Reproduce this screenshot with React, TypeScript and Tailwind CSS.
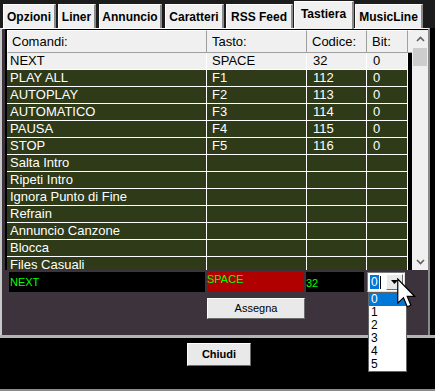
import React from "react"

const tabs = [
  { label: "Opzioni", cls: "ml-[3px] w-[53px]" },
  { label: "Liner", cls: "ml-[2px] w-[38px]" },
  { label: "Annuncio", cls: "ml-[3px] w-[63px]" },
  { label: "Caratteri", cls: "ml-[3px] w-[59px]" },
  { label: "RSS Feed", cls: "ml-[2px] w-[67px]" },
  { label: "Tastiera", cls: "ml-[1px] w-[60px]", active: true },
  { label: "MusicLine", cls: "ml-[1px] w-[68px]" },
]

const rows = [
  ["NEXT", "SPACE", "32", "0"],
  ["PLAY ALL", "F1", "112", "0"],
  ["AUTOPLAY", "F2", "113", "0"],
  ["AUTOMATICO", "F3", "114", "0"],
  ["PAUSA", "F4", "115", "0"],
  ["STOP", "F5", "116", "0"],
  ["Salta Intro", "", "", ""],
  ["Ripeti Intro", "", "", ""],
  ["Ignora Punto di Fine", "", "", ""],
  ["Refrain", "", "", ""],
  ["Annuncio Canzone", "", "", ""],
  ["Blocca", "", "", ""],
  ["Files Casuali", "", "", ""],
]

const Tab = ({ label, cls, active }: { label: string; cls: string; active?: boolean }) => (
  <div
    className={
      active
        ? `${cls} relative z-10 -mb-px flex h-[28px] items-start justify-center border-t border-l border-r-2 border-t-white border-l-white border-r-[#8a8a8a] bg-[#f0f0f0] pt-[3px] text-[12px] font-bold text-black`
        : `${cls} flex h-[24px] items-center justify-center border-t border-l border-r-2 border-t-white border-l-white border-r-[#8a8a8a] bg-[#f0f0f0] text-[12px] font-bold text-black`
    }
  >
    {label}
  </div>
)

const Btn = ({ label, cls }: { label: string; cls: string }) => (
  <div
    className={`${cls} flex items-center justify-center border border-t-white border-l-white border-r-[#6b6b6b] border-b-[#6b6b6b] bg-[#e9e9e9] text-black`}
  >
    {label}
  </div>
)

export default function App() {
  return (
    <div className="relative h-[391px] w-[435px] overflow-hidden bg-black font-['Liberation_Sans',Arial,sans-serif]">
      {/* tab strip */}
      <div className="flex h-[28px] items-end bg-[#1c1c1c]">
        {tabs.map((t) => (
          <Tab key={t.label} {...t} />
        ))}
      </div>

      {/* tab page */}
      <div className="flex h-[307px] w-[430px] flex-col border-t border-l-2 border-r-2 border-t-white border-l-[#c8c8c8] border-r-[#8a8a8a] bg-[#3c333c]">
        {/* list view */}
        <div className="ml-[3px] flex h-[241px] w-[423px] bg-black pt-px pl-[2px]">
          <div className="flex-1 overflow-hidden">
            <div className="flex h-[23px] text-[13px] text-black">
              <div className="flex w-[200px] items-center border-t border-l border-r border-b border-t-white border-l-white border-r-[#a0a0a0] border-b-[#a0a0a0] bg-[#f0f0f0] pl-[4px]">Comandi:</div>
              <div className="flex w-[100px] items-center border-t border-r border-b border-t-white border-r-[#a0a0a0] border-b-[#a0a0a0] bg-[#f0f0f0] pl-[5px]">Tasto:</div>
              <div className="flex w-[60px] items-center border-t border-r border-b border-t-white border-r-[#a0a0a0] border-b-[#a0a0a0] bg-[#f0f0f0] pl-[5px]">Codice:</div>
              <div className="flex w-[41px] items-center border-t border-r border-b border-t-white border-r-[#a0a0a0] border-b-[#a0a0a0] bg-[#f0f0f0] pl-[5px]">Bit:</div>
              <div className="flex-1 border-t border-b border-t-white border-b-[#a0a0a0] bg-[#f0f0f0]" />
            </div>
            {rows.map((r, i) => (
              <div
                key={r[0]}
                className={
                  i === 0
                    ? "flex h-[17px] w-[401px] border-b border-white bg-[#f0f0f0] text-[13px] leading-[16px] text-black"
                    : "flex h-[17px] w-[401px] border-b border-white bg-[#2e3a18] text-[13px] leading-[16px] text-white"
                }
              >
                <div className="w-[200px] border-r border-white pl-[3px]">{r[0]}</div>
                <div className="w-[100px] border-r border-white pl-[5px]">{r[1]}</div>
                <div className="w-[60px] border-r border-white pl-[6px]">{r[2]}</div>
                <div className="w-[41px] border-r border-white pl-[6px]">{r[3]}</div>
              </div>
            ))}
          </div>
          {/* scrollbar */}
          <div className="flex w-[16px] flex-col bg-[#f0f0f0]">
            <div className="flex h-[17px] items-center justify-center">
              <svg width="9" height="6" viewBox="0 0 9 6">
                <path d="M1 5 L4.5 1.5 L8 5" fill="none" stroke="#606060" strokeWidth="1.6" />
              </svg>
            </div>
            <div className="mx-px mt-px h-[18px] bg-[#cdcdcd]" />
            <div className="mt-auto flex h-[17px] items-center justify-center">
              <svg width="9" height="6" viewBox="0 0 9 6">
                <path d="M1 1 L4.5 4.5 L8 1" fill="none" stroke="#606060" strokeWidth="1.6" />
              </svg>
            </div>
          </div>
        </div>

        {/* edit row */}
        <div className="mt-[2px] ml-[7px] flex h-[20px] text-[11px] text-[#00ff00]">
          <div className="flex w-[196px] items-center bg-black pl-px">NEXT</div>
          <div className="ml-[2px] w-[97px] bg-[#b00000] pt-px leading-[12px]">SPACE</div>
          <div className="ml-[2px] flex w-[58px] items-center bg-black pt-[2px]">32</div>
          <div className="ml-[3px] flex w-[38px] items-center border border-t-[#7a7a7a] border-l-[#7a7a7a] border-r-[#e0e0e0] border-b-[#e0e0e0] bg-white pl-[2px]">
            <span className="bg-[#0078d7] px-px text-[12px] leading-[14px] text-white">0</span>
            <span className="ml-px h-[13px] w-px bg-black" />
            <div className="ml-auto mr-px flex h-[16px] w-[17px] items-center justify-center border border-t-white border-l-white border-r-[#6b6b6b] border-b-[#6b6b6b] bg-[#e9e9e9]">
              <svg width="7" height="4" viewBox="0 0 7 4">
                <path d="M0 0 H7 L3.5 4 Z" fill="#000" />
              </svg>
            </div>
          </div>
        </div>

        <Btn label="Assegna" cls="ml-[205px] mt-[6px] h-[21px] w-[98px] text-[11px]" />
      </div>

      <div className="h-[3px] bg-[#b4b4b4]" />
      <div className="flex h-[51px] items-start">
        <Btn label="Chiudi" cls="ml-[187px] mt-[5px] h-[23px] w-[64px] text-[11px] font-bold" />
      </div>
      <div className="h-[3px] bg-[#8c8c8c]" />

      {/* open dropdown list */}
      <div className="absolute left-[368px] top-[292px] w-[39px] border border-[#646464] bg-white text-[12px] leading-[13px] text-black">
        {["0", "1", "2", "3", "4", "5"].map((v, i) => (
          <div key={v} className={i === 0 ? "h-[13px] bg-[#0078d7] pl-[2px] text-white" : "h-[13px] pl-[2px]"}>
            {v}
          </div>
        ))}
      </div>

      {/* mouse pointer */}
      <svg className="absolute left-[397px] top-[278px]" width="19" height="30" viewBox="0 0 12.6 19.6">
        <path d="M0.5 0.5 L0.5 16.5 L4.3 12.9 L6.8 18.9 L9.2 17.9 L6.8 12.1 L11.8 12.1 Z" fill="#fff" stroke="#000" strokeWidth="0.8" strokeLinejoin="miter" />
      </svg>
    </div>
  )
}
